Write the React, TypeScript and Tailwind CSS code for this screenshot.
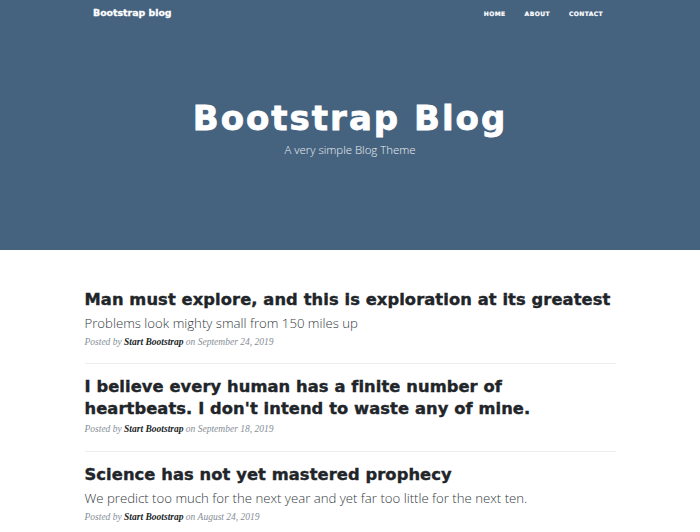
import React from "react";

const posts = [
  {
    title: ["Man must explore, and this is exploration at its greatest"],
    subtitle: "Problems look mighty small from 150 miles up",
    date: "September 24, 2019",
  },
  {
    title: ["I believe every human has a finite number of", "heartbeats. I don't intend to waste any of mine."],
    subtitle: "",
    date: "September 18, 2019",
  },
  {
    title: ["Science has not yet mastered prophecy"],
    subtitle: "We predict too much for the next year and yet far too little for the next ten.",
    date: "August 24, 2019",
  },
];

export default function App() {
  return (
    <div className="min-h-[532px] bg-white font-['DejaVu_Sans',Arial,sans-serif]">
      <header className="bg-[#45627f] h-[250px] flex flex-col">
        <nav className="flex items-center justify-between h-[27px] pl-[93px] pr-[97px]">
          <span className="text-white font-bold text-[9.4px] [-webkit-text-stroke:0.3px_white]">Bootstrap blog</span>
          <div className="flex gap-[19px] text-white font-bold text-[6px] tracking-[0.4px] uppercase [-webkit-text-stroke:0.2px_white]">
            <span>Home</span>
            <span>About</span>
            <span>Contact</span>
          </div>
        </nav>
        <div className="flex flex-col items-center pt-[71px]">
          <h1 className="text-white font-bold text-[34px] leading-[40px] tracking-[2px] [-webkit-text-stroke:0.8px_white]">
            Bootstrap Blog
          </h1>
          <p className="text-white/90 text-[11.4px] font-light font-['Open_Sans',sans-serif] mt-[3px]">
            A very simple Blog Theme
          </p>
        </div>
      </header>
      <main className="w-[531px] mx-auto pt-[39px]">
        {posts.map((p, i) => (
          <article key={i}>
            <h2 className="text-[#212529] font-bold text-[16.3px] leading-[22px] tracking-[0.1px] [-webkit-text-stroke:0.4px_#212529]">
              {p.title.map((line, j) => (
                <span key={j} className="block">
                  {line}
                </span>
              ))}
            </h2>
            {p.subtitle && (
              <h3 className="text-[#343a40] font-light font-['Open_Sans',sans-serif] text-[13.2px] leading-[20px] mt-[2px]">
                {p.subtitle}
              </h3>
            )}
            <p className="text-[#868e96] italic font-['Liberation_Serif',serif] text-[9.5px] mt-[2px]">
              Posted by <span className="text-[#212529] font-bold">Start Bootstrap</span> on {p.date}
            </p>
            {i < posts.length - 1 && <hr className="border-[#eeeeee] mt-[14px] mb-[12px]" />}
          </article>
        ))}
      </main>
    </div>
  );
}
